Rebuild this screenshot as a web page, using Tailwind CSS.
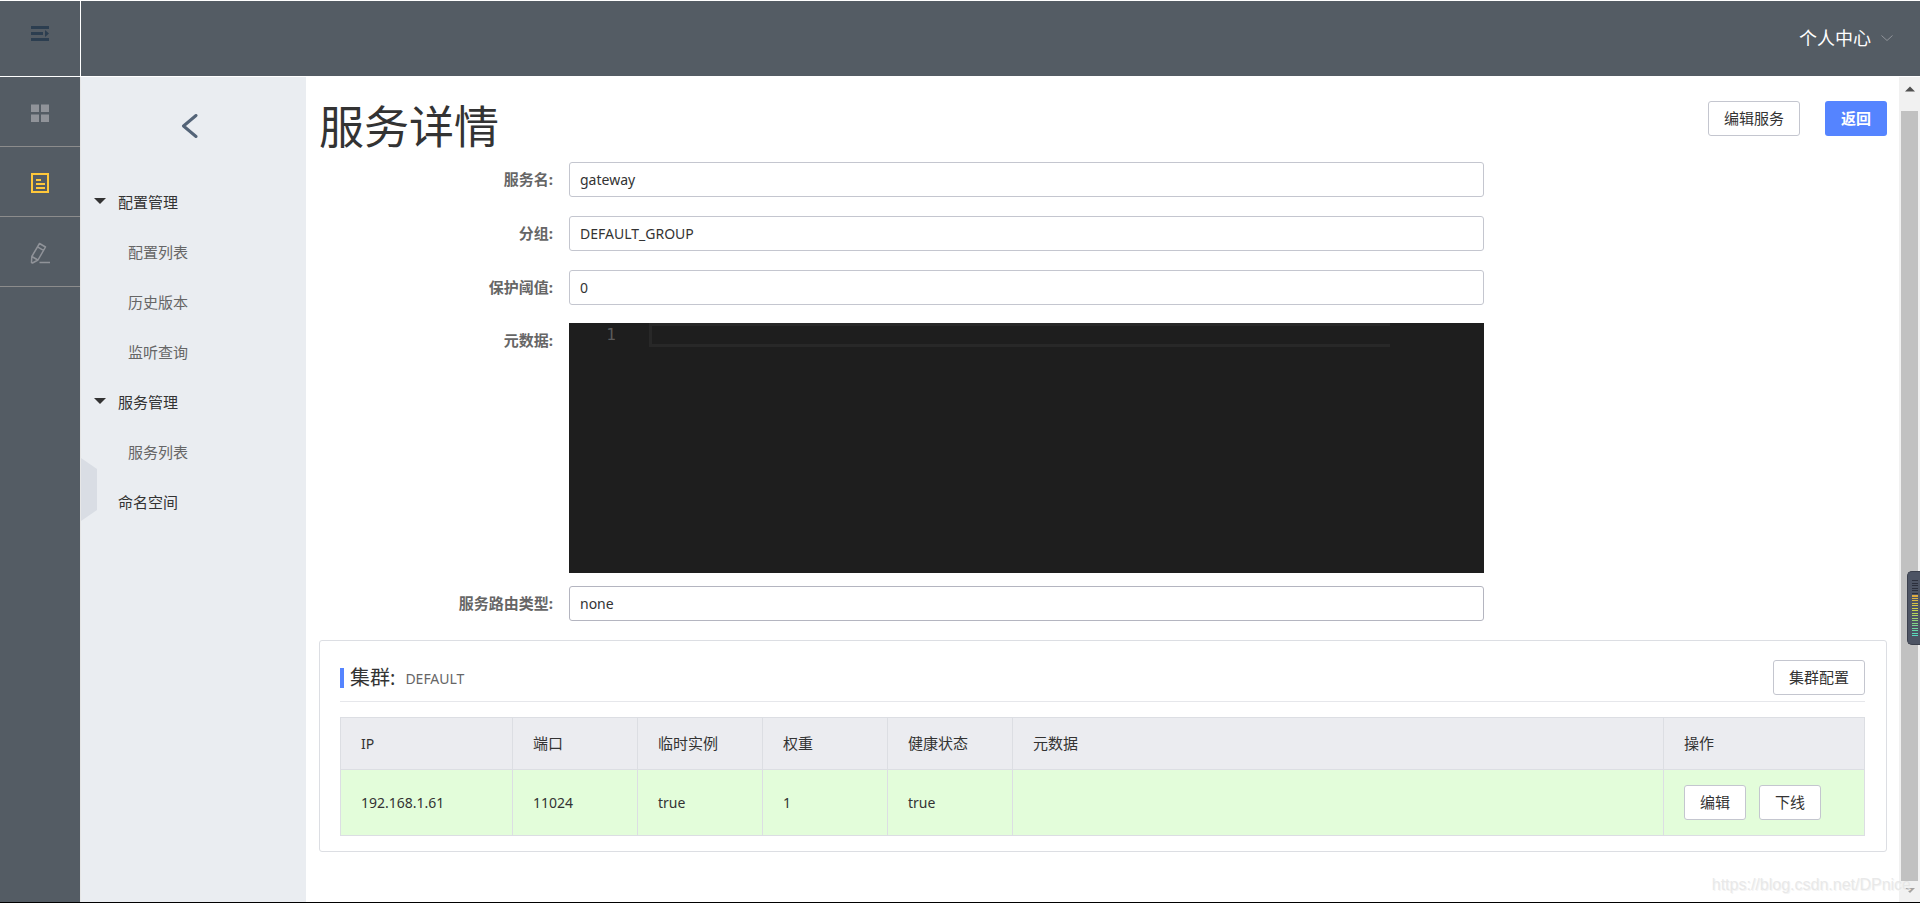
<!DOCTYPE html>
<html lang="zh-CN">
<head>
<meta charset="utf-8">
<meta name="viewport" content="width=device-width, initial-scale=1">
<title>服务详情</title>
<script src="https://cdn.jsdelivr.net/npm/@tailwindcss/browser@4"></script>
</head>
<body class="flex h-screen flex-col overflow-hidden border-t border-b border-t-white border-b-black bg-white font-['Noto_Sans','Noto_Sans_CJK_SC',sans-serif] text-[15px] text-[#333]">

<header class="flex h-[76px] shrink-0 border-b border-white bg-[#545c64]">
  <button type="button" aria-label="展开菜单" class="flex w-[81px] shrink-0 justify-center border-r border-white pt-[25px]">
    <svg class="h-4 w-[18px]" viewBox="0 0 18 16" fill="#2c3e50"><path d="M0 0h18v3H0zM0 6h12v3H0zM0 12h18v3H0zM14 4l4 3.500-4 3.500z"/></svg>
  </button>
  <div class="flex flex-1 items-center justify-end pr-[27px] pb-0.5">
    <button type="button" class="flex items-center gap-2.5 text-[18px] leading-6 text-white">个人中心
      <svg class="h-2 w-3" viewBox="0 0 12 8" fill="none" stroke="#909399"><path d="M.5 1.500 6 6.500l5.500-5"/></svg>
    </button>
  </div>
</header>

<div class="flex min-h-0 flex-1">
  <nav aria-label="主导航" class="w-[81px] shrink-0 border-r border-[#e6e6e6] bg-[#545c64]">
    <a href="#" aria-label="应用" class="flex h-[70px] items-center justify-center border-b border-[#8c8c8c] pt-0.5">
      <svg class="h-5 w-5" viewBox="0 0 20 20" fill="#909399"><path d="M1 1.500h8v7.500H1zM11 1.500h8v7.500h-8zM1 11.500h8V19H1zM11 11.500h8V19h-8z"/></svg>
    </a>
    <a href="#" aria-label="服务" class="flex h-[70px] items-center justify-center border-b border-[#8c8c8c] pt-0.5">
      <svg class="h-[22px] w-5" viewBox="0 0 20 22" fill="none" stroke="#ffc83a" stroke-width="2"><path d="M2 2h16v18H2zM6 8h5M6 12h9M6 16h9"/></svg>
    </a>
    <a href="#" aria-label="编辑" class="flex h-[70px] items-center justify-center border-b border-[#8c8c8c] pt-0.5">
      <svg class="h-[22px] w-5" viewBox="0 0 20 22" fill="none" stroke="#909399" stroke-width="1.500" stroke-linejoin="round"><path d="M9.500 1.500l6 3.500-7.500 13-5.500 3-1-.5.300-6zM7.500 4.800l6 3.500M1.800 14.500l6 3.500M9.500 20.500H20"/></svg>
    </a>
  </nav>

  <aside class="relative w-[225px] shrink-0 bg-[#eaedf1]">
    <div class="flex h-[75px] items-end justify-center pr-2 pb-3.5">
      <button type="button" aria-label="返回上级">
        <svg class="h-6 w-[18px]" viewBox="0 0 18 24" fill="none" stroke="#546478" stroke-width="3" stroke-linecap="round" stroke-linejoin="round"><path d="M15 1.500 2.500 12 15 22.500"/></svg>
      </button>
    </div>
    <ul class="pt-[25px] leading-[50px]">
      <li>
        <button type="button" class="flex h-[50px] items-center gap-3 pl-[13px]"><svg class="h-2 w-3" viewBox="0 0 12 8" fill="#333"><path d="M0 0h12L6 6z"/></svg>配置管理</button>
        <ul class="pl-[47px] text-[#666]">
          <li><a href="#">配置列表</a></li>
          <li><a href="#">历史版本</a></li>
          <li><a href="#">监听查询</a></li>
        </ul>
      </li>
      <li>
        <button type="button" class="flex h-[50px] items-center gap-3 pl-[13px]"><svg class="h-2 w-3" viewBox="0 0 12 8" fill="#333"><path d="M0 0h12L6 6z"/></svg>服务管理</button>
        <ul class="pl-[47px] text-[#666]">
          <li><a href="#">服务列表</a></li>
        </ul>
      </li>
      <li class="pl-[37px]"><a href="#">命名空间</a></li>
    </ul>
    <button type="button" aria-label="收起侧栏" class="absolute top-[381px] left-0">
      <svg class="h-[63px] w-4" viewBox="0 0 16 63" fill="#d9dde4"><path d="M0 0l16 11v41L0 63z"/></svg>
    </button>
  </aside>

  <main class="min-w-0 flex-1 overflow-hidden pr-3 pl-[13px]">
    <div class="flex h-[85px] items-start justify-between pt-6">
      <h1 class="text-[45px] leading-[52px]">服务详情</h1>
      <div class="flex gap-[25px]">
        <button type="button" class="h-[35px] rounded-[3px] border border-[#c4c6cf] bg-white px-[15px]">编辑服务</button>
        <button type="button" class="h-[35px] rounded-[3px] bg-[#5584ff] px-4 font-bold text-white">返回</button>
      </div>
    </div>

    <form>
      <div class="mb-[19px] flex items-center">
        <label for="name" class="w-[250px] shrink-0 pr-4 text-right font-bold text-[#666]">服务名:</label>
        <input id="name" readonly value="gateway" class="h-[35px] w-7/12 rounded-[3px] border border-[#c4c6cf] px-2.5 text-sm">
      </div>
      <div class="mb-[19px] flex items-center">
        <label for="group" class="w-[250px] shrink-0 pr-4 text-right font-bold text-[#666]">分组:</label>
        <input id="group" readonly value="DEFAULT_GROUP" class="h-[35px] w-7/12 rounded-[3px] border border-[#c4c6cf] px-2.5 text-sm">
      </div>
      <div class="mb-[18px] flex items-center">
        <label for="threshold" class="w-[250px] shrink-0 pr-4 text-right font-bold text-[#666]">保护阈值:</label>
        <input id="threshold" readonly value="0" class="h-[35px] w-7/12 rounded-[3px] border border-[#c4c6cf] px-2.5 text-sm">
      </div>
      <div class="mb-[13px] flex items-start">
        <label for="metadata" class="w-[250px] shrink-0 pr-4 text-right leading-[35px] font-bold text-[#666]">元数据:</label>
        <div class="flex h-[250px] w-7/12 bg-[#1e1e1e] font-['DejaVu_Sans_Mono',monospace]">
          <span class="w-20 shrink-0 pr-[33px] text-right text-base leading-6 text-[#5a5a5a]">1</span>
          <textarea id="metadata" readonly class="mr-[94px] h-6 min-w-0 flex-1 resize-none overflow-hidden border-[3px] border-r-0 border-[#282828] text-sm text-[#d4d4d4]"></textarea>
        </div>
      </div>
      <div class="mb-[19px] flex items-center">
        <label for="selector" class="w-[250px] shrink-0 pr-4 text-right font-bold text-[#666]">服务路由类型:</label>
        <input id="selector" readonly value="none" class="h-[35px] w-7/12 rounded-[3px] border border-[#b4b5c0] px-2.5 text-sm">
      </div>
    </form>

    <section class="rounded-[3px] border border-[#dcdee3] pt-[19px] pr-[21px] pb-[15px] pl-5">
      <div class="flex items-start justify-between border-b border-[#e6e7eb] pb-1.5">
        <h2 class="flex h-[35px] items-center">
          <span class="mr-1.5 h-5 w-1 bg-[#5584ff]"></span>
          <span class="text-[20px]">集群:</span>
          <span class="ml-2.5 pt-0.5 text-sm text-[#666]">DEFAULT</span>
        </h2>
        <button type="button" class="h-[35px] rounded-[3px] border border-[#c4c6cf] bg-white px-[15px]">集群配置</button>
      </div>
      <table class="mt-[15px] w-full table-fixed border-collapse text-left">
        <colgroup><col class="w-[172px]"><col class="w-[125px]"><col class="w-[125px]"><col class="w-[125px]"><col class="w-[125px]"><col><col class="w-[201px]"></colgroup>
        <thead>
          <tr class="h-[52px] bg-[#ebecf0]">
            <th class="border border-[#dcdee3] px-5 text-sm font-normal">IP</th>
            <th class="border border-[#dcdee3] px-5 font-normal">端口</th>
            <th class="border border-[#dcdee3] px-5 font-normal">临时实例</th>
            <th class="border border-[#dcdee3] px-5 font-normal">权重</th>
            <th class="border border-[#dcdee3] px-5 font-normal">健康状态</th>
            <th class="border border-[#dcdee3] px-5 font-normal">元数据</th>
            <th class="border border-[#dcdee3] px-5 font-normal">操作</th>
          </tr>
        </thead>
        <tbody>
          <tr class="h-[66px] bg-[#e3fdda] text-sm">
            <td class="border border-[#dcdee3] px-5">192.168.1.61</td>
            <td class="border border-[#dcdee3] px-5">11024</td>
            <td class="border border-[#dcdee3] px-5">true</td>
            <td class="border border-[#dcdee3] px-5">1</td>
            <td class="border border-[#dcdee3] px-5">true</td>
            <td class="border border-[#dcdee3] px-5"></td>
            <td class="border border-[#dcdee3] px-5">
              <div class="flex gap-[13px] text-[15px]">
                <button type="button" class="h-[35px] rounded-[3px] border border-[#c4c6cf] bg-white px-[15px]">编辑</button>
                <button type="button" class="h-[35px] rounded-[3px] border border-[#c4c6cf] bg-white px-[15px]">下线</button>
              </div>
            </td>
          </tr>
        </tbody>
      </table>
    </section>
  </main>

  <!-- Scroll track -->
  <div class="flex w-[21px] shrink-0 flex-col items-center bg-[#f1f1f1]">
    <svg class="my-[9px] h-4 w-[10px] shrink-0" viewBox="0 0 10 16" fill="#505050"><path d="M0 5.500h10L5 .5z"/></svg>
    <div class="w-[17px] flex-1 bg-[#c1c1c1]"></div>
    <svg class="mt-[7px] mb-[9px] h-[5px] w-[10px] shrink-0" viewBox="0 0 10 5" fill="#a3a3a3"><path d="M0 0h10L5 5z"/></svg>
  </div>
</div>

<!-- Floating level meter -->
<div class="absolute top-[571px] right-0 flex h-[74px] w-[13px] items-center rounded-l-[5px] border border-r-0 border-[#3a3f4c] bg-[#4d5464] pl-1">
  <svg class="h-[57px] w-[6px]" viewBox="0 0 6 57" fill="none">
    <defs><linearGradient id="level" x1="0" y1="15" x2="0" y2="57" gradientUnits="userSpaceOnUse"><stop offset="0" stop-color="#e0a840"/><stop offset=".35" stop-color="#ccd64a"/><stop offset=".7" stop-color="#7fd48a"/><stop offset="1" stop-color="#4fdcc8"/></linearGradient></defs>
    <path d="M0 0h6v1H0zM0 3h6v1H0zM0 5h6v1H0zM0 8h6v1H0zM0 10h6v1H0zM0 13h6v1H0z" fill="#2b2f3c"/>
    <path d="M0 15h6v2H0zM0 18h6v1H0zM0 20h6v1H0zM0 23h6v1H0zM0 25h6v1H0zM0 28h6v1H0zM0 30h6v1H0zM0 33h6v1H0zM0 35h6v1H0zM0 38h6v1H0zM0 40h6v1H0zM0 43h6v1H0zM0 45h6v1H0zM0 48h6v1H0zM0 50h6v1H0zM0 53h6v1H0zM0 55h6v1H0z" fill="url(#level)"/>
  </svg>
</div>
<div class="absolute right-[9px] bottom-[6px] font-['Liberation_Sans',sans-serif] text-base leading-6 text-[#e4e4e4]/80 [text-shadow:1px_1px_0_#f4f4f4]">https://blog.csdn.net/DPnice</div>
</body>
</html>
